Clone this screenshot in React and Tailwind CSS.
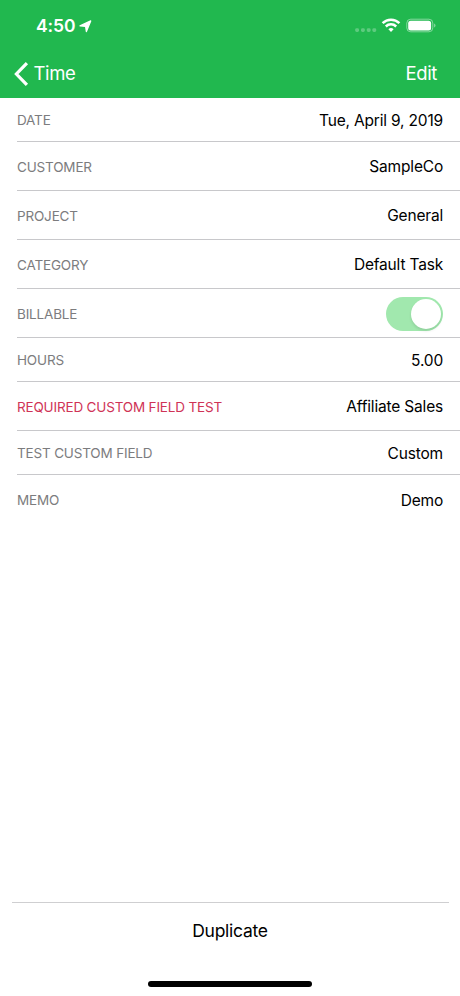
import React from 'react';

const rows = [
  { label: 'DATE', value: 'Tue, April 9, 2019', height: 'h-[44px]' },
  { label: 'CUSTOMER', value: 'SampleCo', height: 'h-[49px]' },
  { label: 'PROJECT', value: 'General', height: 'h-[49px]' },
  { label: 'CATEGORY', value: 'Default Task', height: 'h-[49px]' },
  { label: 'BILLABLE', toggle: true, height: 'h-[49px]' },
  { label: 'HOURS', value: '5.00', height: 'h-[44px]' },
  { label: 'REQUIRED CUSTOM FIELD TEST', value: 'Affiliate Sales', height: 'h-[49px]', required: true },
  { label: 'TEST CUSTOM FIELD', value: 'Custom', height: 'h-[44px]' },
  { label: 'MEMO', value: 'Demo', height: 'h-[49px]', last: true },
];

const StatusBar = () => (
  <div className="flex h-[50px] items-center justify-between pl-9 pr-[24px]">
    <div className="flex items-center gap-[4px] pt-[2px]">
      <span className="text-[17.5px] font-semibold leading-none tracking-[-0.1px]">4:50</span>
      <svg width="13" height="13" viewBox="0 0 13 13" fill="currentColor">
        <path d="M11.7 0.9 L7.4 11.6 L6.6 6.4 L1 5.8 Z" stroke="currentColor" strokeWidth="1.3" strokeLinejoin="round" />
      </svg>
    </div>
    <svg width="82" height="16" viewBox="0 0 82 16" fill="none">
      <g fill="#fff" opacity="0.27">
        <rect x="1.2" y="11.2" width="3.8" height="3.8" rx="1.4" />
        <rect x="7" y="11.2" width="3.8" height="3.8" rx="1.4" />
        <rect x="12.8" y="11.2" width="3.8" height="3.8" rx="1.4" />
        <rect x="18.4" y="11.2" width="3.8" height="3.8" rx="1.4" />
      </g>
      <g stroke="#fff" strokeWidth="2.5">
        <path d="M28.6 6.2 A12 12 0 0 1 45.4 6.2" />
        <path d="M31.8 9.5 A7.4 7.4 0 0 1 42.2 9.5" />
      </g>
      <path d="M37 14.9 L34.4 12.3 A3.7 3.7 0 0 1 39.6 12.3 Z" fill="#fff" />
      <rect x="52.8" y="2.2" width="26" height="12.6" rx="3.9" stroke="#fff" strokeOpacity="0.45" />
      <rect x="54.2" y="3.7" width="22.9" height="9.8" rx="2.5" fill="#fff" />
      <path d="M80.2 6.4 A2.4 2.4 0 0 1 80.2 10.6 Z" fill="#fff" opacity="0.5" />
    </svg>
  </div>
);

const NavBar = () => (
  <div className="flex h-12 items-center justify-between pl-[14px] pr-[23px] text-[18.5px] tracking-[-0.35px]">
    <button className="flex items-center gap-[4.5px]">
      <svg width="15" height="24" viewBox="0 0 15 24" fill="none" stroke="currentColor" strokeWidth="3.2">
        <path d="M12.9 1.2 L2.4 12 L12.9 22.8" />
      </svg>
      <span>Time</span>
    </button>
    <button>Edit</button>
  </div>
);

const Toggle = () => (
  <div className="mt-px flex h-[34px] w-[57px] items-center justify-end rounded-full bg-[#a1e8ae] pr-[2px]">
    <div className="h-[30px] w-[30px] rounded-full bg-white shadow-[0_2px_3px_rgba(0,0,0,0.1)]" />
  </div>
);

const Row = ({ label, value, height, toggle, required, last }) => (
  <div className={`ml-[17px] flex items-center justify-between pr-[17px] ${height} ${last ? '' : 'border-b border-[#c8c8cb]'}`}>
    <span className={`pt-[2px] text-[13.5px] tracking-[-0.17px] ${required ? 'text-[#cf3356]' : 'text-[#7c7c7e]'}`}>{label}</span>
    {toggle ? <Toggle /> : <span className="pt-[2px] text-[15.5px] tracking-[-0.18px] text-black">{value}</span>}
  </div>
);

const App = () => {
  return (
    <div className="flex h-[996px] w-[460px] flex-col bg-white font-['Inter',sans-serif]">
      <header className="h-[98px] bg-[#21b84f] text-white">
        <StatusBar />
        <NavBar />
      </header>

      <main className="flex-1">
        {rows.map(row => (
          <Row key={row.label} {...row} />
        ))}
      </main>

      <footer className="flex h-[94px] flex-col items-center">
        <div className="h-px w-[437px] bg-[#cfcfd1]" />
        <button className="mt-[14px] h-[28px] text-[17.5px] tracking-[-0.25px] text-black">Duplicate</button>
        <div className="mt-[36px] h-[6px] w-[164px] rounded-full bg-black" />
      </footer>
    </div>
  );
};

export default App;
